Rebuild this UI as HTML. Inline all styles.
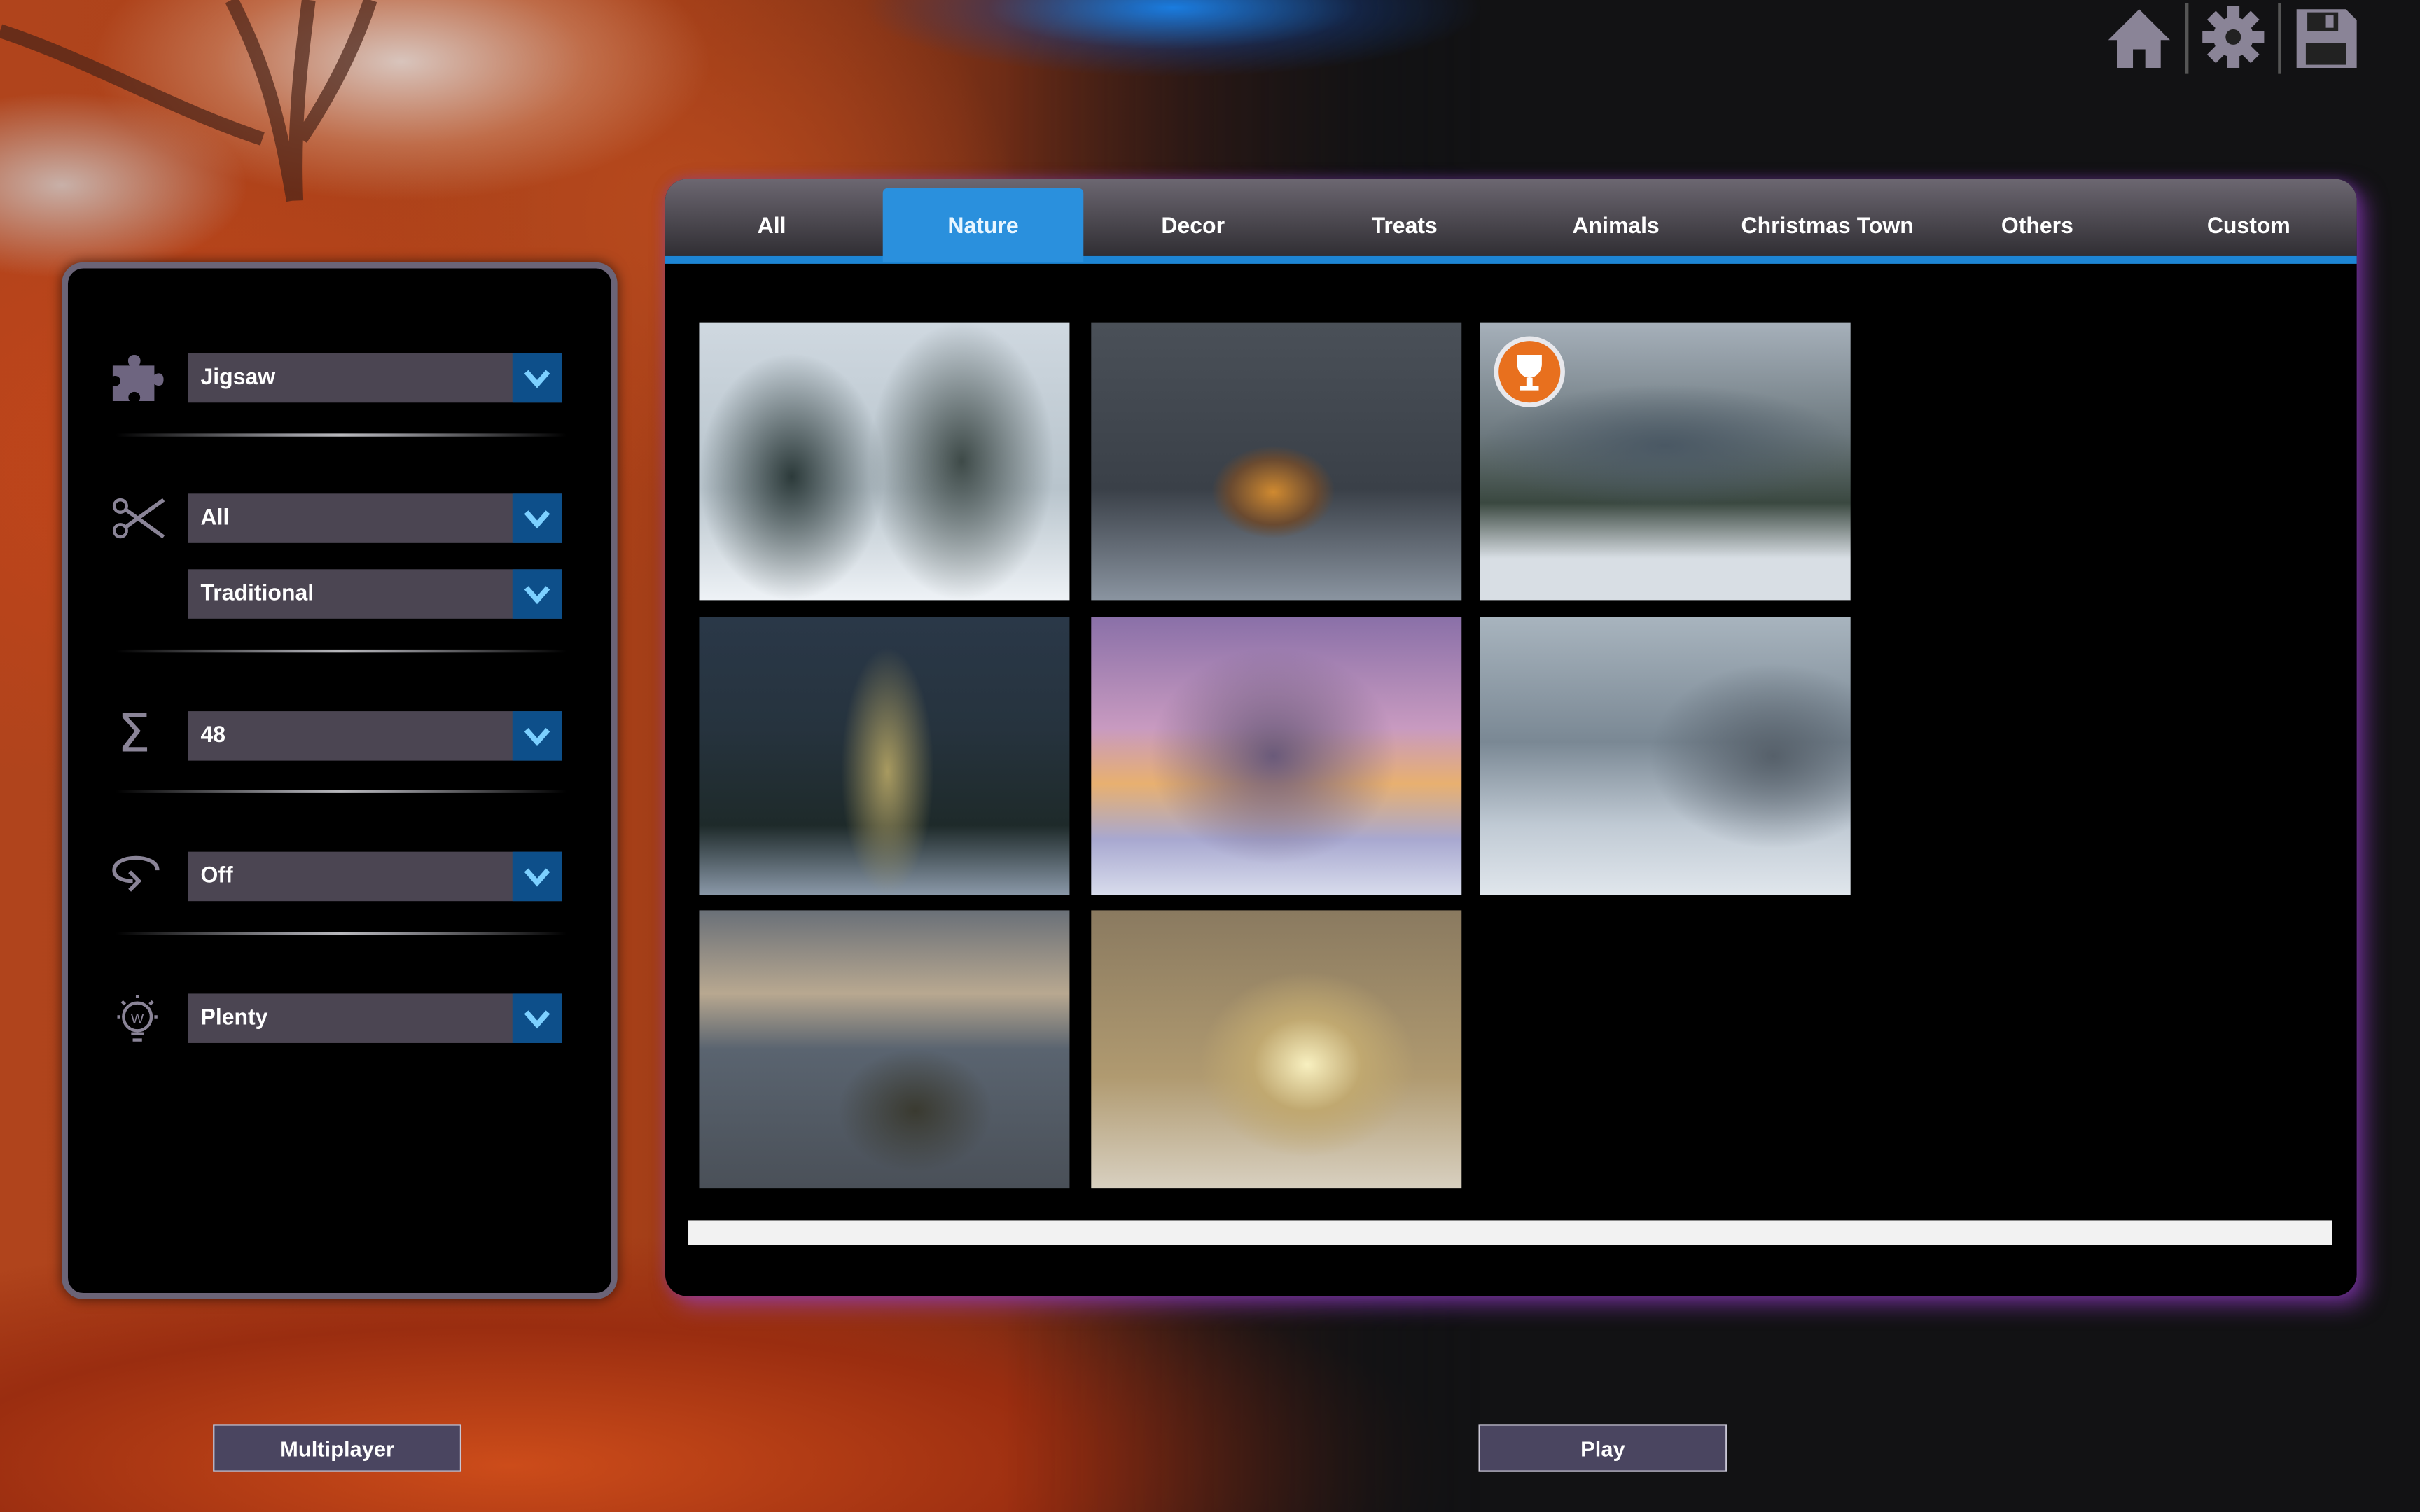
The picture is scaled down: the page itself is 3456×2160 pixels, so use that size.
<!DOCTYPE html>
<html><head><meta charset="utf-8"><style>
html,body{margin:0;padding:0;width:3456px;height:2160px;overflow:hidden;background:#121214}
#s{position:absolute;left:0;top:0;width:1568px;height:980px;transform:scale(2.20408);transform-origin:0 0;font-family:"Liberation Sans",Arial,sans-serif;overflow:hidden}
.a{position:absolute}
.tree{left:0;top:0;width:1000px;height:980px;background:
radial-gradient(ellipse 200px 90px at 260px 40px,#d8c4bc 0,rgba(210,150,120,.5) 60%,transparent),
radial-gradient(ellipse 120px 60px at 40px 120px,#c8b0a8,transparent),
radial-gradient(ellipse 320px 220px at 120px 300px,#c2451a,transparent),
radial-gradient(ellipse 300px 260px at 450px 140px,#b84a1e,transparent 70%),
radial-gradient(ellipse 620px 150px at 330px 950px,#cc4c1a,#9a2d10 60%,transparent),
linear-gradient(90deg,#b0441c 0,#a84018 400px,#7a3016 620px,#3a1c16 780px,#151416 900px);
-webkit-mask-image:linear-gradient(90deg,#000 650px,transparent 960px);mask-image:linear-gradient(90deg,#000 650px,transparent 960px)}
.glow{left:0;top:0;width:1568px;height:980px;background:radial-gradient(ellipse 200px 45px at 760px 5px,rgba(25,130,235,.95),rgba(20,70,160,.35) 60%,transparent)}
.drop{left:122px;width:242px;height:32px;background:#4b4552;color:#fff;font-weight:bold;font-size:14.5px;line-height:33px;text-indent:8px}
.drop i{position:absolute;right:0;top:0;width:32px;height:32px;background:#0d4f8a}
.drop svg{position:absolute;right:7px;top:9px}
.sep{left:75px;width:292px;height:2px;background:linear-gradient(90deg,transparent,#9a9aa0 40%,#b8b8bc 50%,#9a9aa0 60%,transparent)}
.tab{top:116px;height:50px;line-height:62px;color:#fff;font-weight:bold;font-size:14.5px;text-align:center;width:136px}
.th{width:240px;height:180px}
.btn{top:923px;width:159px;height:29px;background:#4a4560;border:1.5px solid #c9c6d4;color:#fff;font-weight:bold;font-size:14px;text-align:center;line-height:30px}
</style></head><body><div id="s">
<div class="a tree"></div>
<svg class="a" style="left:0;top:0" width="420" height="200"><path d="M150 0 C170 40 180 70 190 130 M200 0 C195 40 190 80 192 130 M0 20 C60 40 110 70 170 90 M240 0 C230 30 215 60 195 90" stroke="#4a2418" stroke-width="9" fill="none" opacity=".7"/></svg>
<div class="a glow"></div>
<!-- top icons -->
<svg class="a" style="left:1362px;top:2px" width="170" height="46" viewBox="0 0 170 46">
<path d="M24 4 L4 24 H10 V42 H20 V30 H28 V42 H38 V24 H44 Z" fill="#8a8497"/>
<line x1="55" y1="0" x2="55" y2="46" stroke="#555" stroke-width="2"/>
<g transform="translate(85,22)" fill="#8a8497"><circle r="13"/><g id="t"><rect x="-4" y="-20" width="8" height="40"/></g><use href="#t" transform="rotate(45)"/><use href="#t" transform="rotate(90)"/><use href="#t" transform="rotate(135)"/><circle r="5" fill="#222"/></g>
<line x1="115" y1="0" x2="115" y2="46" stroke="#555" stroke-width="2"/>
<path d="M126 4 H158 L165 11 V42 H126 Z" fill="#8a8497"/><rect x="133" y="6" width="20" height="12" fill="#222"/><rect x="145" y="8" width="5" height="8" fill="#8a8497"/><rect x="132" y="26" width="26" height="14" fill="#222"/>
</svg>
<!-- left panel -->
<div class="a" style="left:40px;top:170px;width:352px;height:664px;border:4px solid #6b6477;border-radius:14px;background:#000;box-shadow:0 0 8px rgba(0,0,0,.6)"></div>
<svg class="a" style="left:72px;top:229px" width="34" height="32" viewBox="0 0 34 32"><path d="M1 8 H12 C10 5 11 1 15 1 C19 1 20 5 18 8 H28 V14 C31 12 34 13 34 17 C34 21 31 22 28 20 V31 H18 C20 28 18 25 15 25 C12 25 10 28 12 31 H1 V21 C4 22 6 20 6 18 C6 15 3 14 1 15 Z" fill="#6e6580"/></svg>
<div class="a drop" style="top:229px">Jigsaw<i><svg width="18" height="14"><path d="M2 3 L9 11 L16 3" stroke="#7cd0ff" stroke-width="3.5" fill="none"/></svg></i></div>
<div class="a sep" style="top:281px"></div>
<svg class="a" style="left:72px;top:320px" width="36" height="32" viewBox="0 0 36 32"><circle cx="6" cy="8" r="4" stroke="#8a8497" stroke-width="2" fill="none"/><circle cx="6" cy="24" r="4" stroke="#8a8497" stroke-width="2" fill="none"/><path d="M9 10 L34 28 M9 22 L34 4" stroke="#8a8497" stroke-width="2.5"/></svg>
<div class="a drop" style="top:320px">All<i><svg width="18" height="14"><path d="M2 3 L9 11 L16 3" stroke="#7cd0ff" stroke-width="3.5" fill="none"/></svg></i></div>
<div class="a drop" style="top:369px">Traditional<i><svg width="18" height="14"><path d="M2 3 L9 11 L16 3" stroke="#7cd0ff" stroke-width="3.5" fill="none"/></svg></i></div>
<div class="a sep" style="top:421px"></div>
<div class="a" style="left:76px;top:456px;color:#8a8497;font-size:34px;font-family:'DejaVu Sans',sans-serif">Σ</div>
<div class="a drop" style="top:461px">48<i><svg width="18" height="14"><path d="M2 3 L9 11 L16 3" stroke="#7cd0ff" stroke-width="3.5" fill="none"/></svg></i></div>
<div class="a sep" style="top:512px"></div>
<svg class="a" style="left:72px;top:554px" width="34" height="26" viewBox="0 0 34 26"><path d="M30 10 C30 4 22 2 16 2 C8 2 2 5 2 10 C2 15 8 17 14 17" stroke="#8a8497" stroke-width="2.5" fill="none"/><path d="M12 11 L18 17 L12 23" stroke="#8a8497" stroke-width="2.5" fill="none"/></svg>
<div class="a drop" style="top:552px">Off<i><svg width="18" height="14"><path d="M2 3 L9 11 L16 3" stroke="#7cd0ff" stroke-width="3.5" fill="none"/></svg></i></div>
<div class="a sep" style="top:604px"></div>
<svg class="a" style="left:72px;top:644px" width="34" height="34" viewBox="0 0 34 34"><circle cx="17" cy="15" r="9" stroke="#8a8497" stroke-width="2" fill="none"/><path d="M13 26 H21 M14 30 H20 M17 1 V3 M4 15 H6 M28 15 H30 M7 5 L9 7 M27 5 L25 7" stroke="#8a8497" stroke-width="2"/><text x="17" y="19" font-size="9" fill="#8a8497" text-anchor="middle" font-family="Liberation Sans">W</text></svg>
<div class="a drop" style="top:644px">Plenty<i><svg width="18" height="14"><path d="M2 3 L9 11 L16 3" stroke="#7cd0ff" stroke-width="3.5" fill="none"/></svg></i></div>
<!-- right panel -->
<div class="a" style="left:431px;top:116px;width:1096px;height:724px;border-radius:14px;background:#000;box-shadow:6px 6px 14px rgba(150,60,200,.6),0 0 8px rgba(120,60,180,.4)"></div>
<div class="a" style="left:431px;top:116px;width:1096px;height:50px;border-radius:14px 14px 0 0;background:linear-gradient(#6c6771,#302e33)"></div>
<div class="a" style="left:431px;top:166px;width:1096px;height:5px;background:#1d85d4"></div>
<div class="a" style="left:572px;top:122px;width:130px;height:48px;background:#2a90dd;border-radius:3px 3px 0 0"></div>
<div class="a tab" style="left:432px">All</div>
<div class="a tab" style="left:569px;color:#e8f6ff">Nature</div>
<div class="a tab" style="left:705px">Decor</div>
<div class="a tab" style="left:842px">Treats</div>
<div class="a tab" style="left:979px">Animals</div>
<div class="a tab" style="left:1106px;width:156px">Christmas Town</div>
<div class="a tab" style="left:1252px">Others</div>
<div class="a tab" style="left:1389px">Custom</div>
<!-- thumbnails -->
<div class="a th" style="left:453px;top:209px;background:radial-gradient(ellipse 60px 80px at 60px 100px,#2c3a3a,transparent),radial-gradient(ellipse 60px 90px at 170px 90px,#3e4a48,transparent),linear-gradient(#cfd8e0,#b8c4cc 60%,#eef2f6)"></div>
<div class="a th" style="left:707px;top:209px;background:radial-gradient(ellipse 40px 30px at 118px 110px,#d08a30,#6a4a30 70%,transparent),linear-gradient(#4a5058,#3a4048 60%,#8a94a0)"></div>
<div class="a th" style="left:959px;top:209px;background:radial-gradient(ellipse 120px 40px at 120px 80px,#4a5864,transparent),linear-gradient(#a6b0ba,#6e7a80 40%,#3a4840 65%,#d8dee4 85%)"></div>
<svg class="a" style="left:966px;top:216px" width="50" height="50"><circle cx="25" cy="25" r="23" fill="#e8e8ec"/><circle cx="25" cy="25" r="20" fill="#e8701e"/><path d="M17 14 H33 V20 C33 26 28 29 25 29 C22 29 17 26 17 20 Z M23 29 H27 V34 H31 V37 H19 V34 H23 Z" fill="#fff"/></svg>
<div class="a th" style="left:453px;top:400px;background:radial-gradient(ellipse 30px 80px at 122px 100px,#a89a60,transparent),linear-gradient(#2a3848,#26333e 40%,#1e2a2a 75%,#8a98a8)"></div>
<div class="a th" style="left:707px;top:400px;background:radial-gradient(ellipse 80px 70px at 118px 90px,#6a5a7a,transparent),linear-gradient(#8a70a8,#c89ac0 40%,#e8b070 60%,#a8a8d0 80%,#d8dcec)"></div>
<div class="a th" style="left:959px;top:400px;background:radial-gradient(ellipse 80px 60px at 190px 90px,#56606a,transparent),linear-gradient(#a8b4be,#7a8894 45%,#c0cad4 75%,#e0e6ec)"></div>
<div class="a th" style="left:453px;top:590px;background:radial-gradient(ellipse 50px 40px at 140px 130px,#3a3a30,transparent),linear-gradient(#6a7078,#b8a890 30%,#5a6470 50%,#4a5058 100%)"></div>
<div class="a th" style="left:707px;top:590px;background:radial-gradient(ellipse 70px 60px at 140px 100px,#f8f0c0,#c0a870 50%,transparent),linear-gradient(#8a7a60,#b09a70 60%,#d8d0c0)"></div>
<div class="a" style="left:446px;top:791px;width:1065px;height:16px;background:#f2f2f2"></div>
<!-- buttons -->
<div class="a btn" style="left:138px">Multiplayer</div>
<div class="a btn" style="left:958px">Play</div>
</div></body></html>
